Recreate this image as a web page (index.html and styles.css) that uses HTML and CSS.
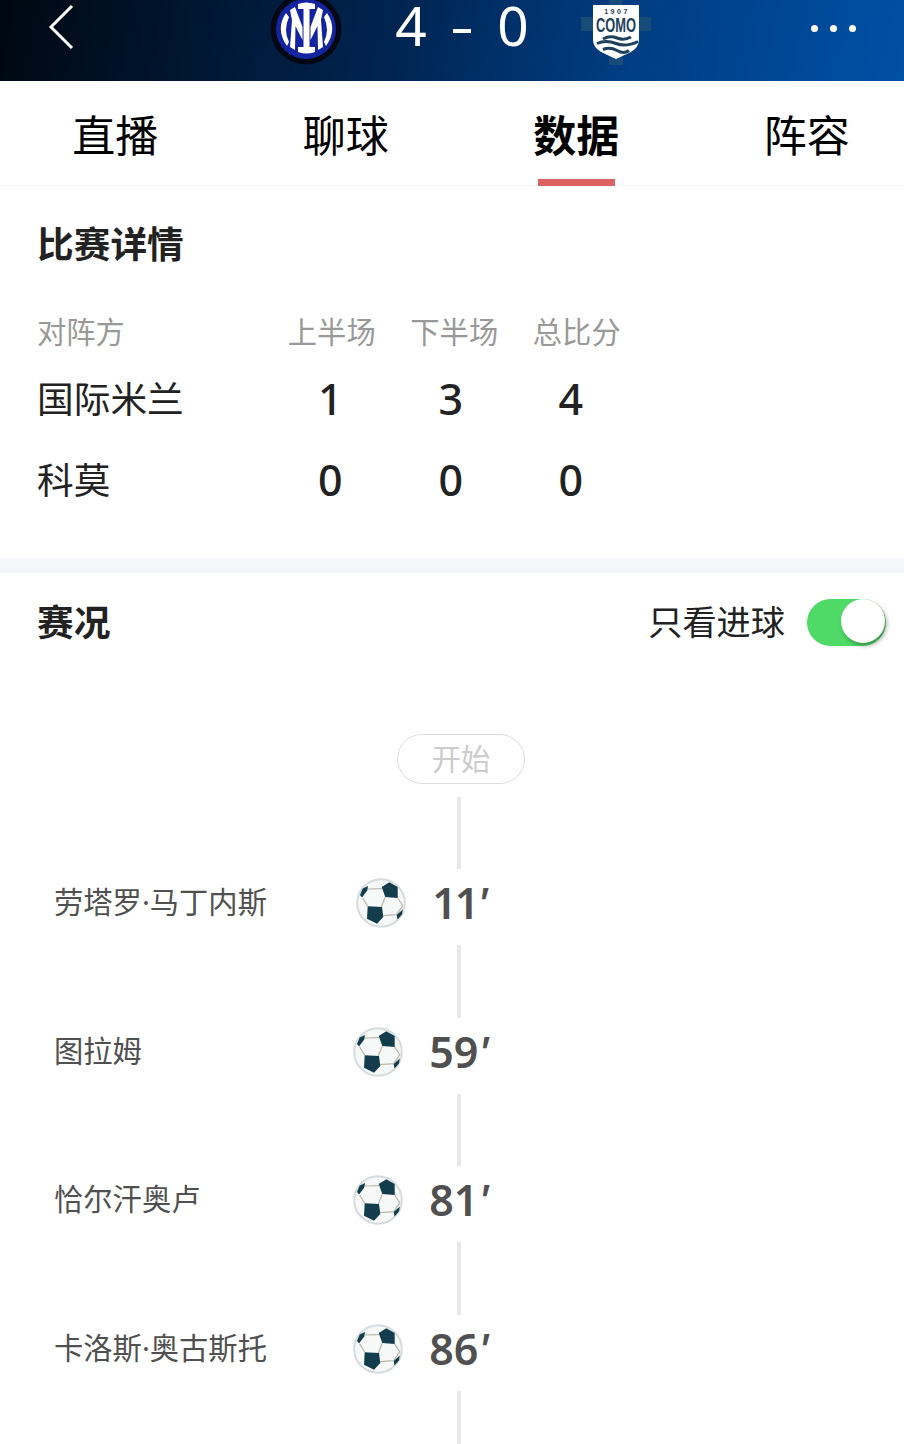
FILE: index.html
```
<!DOCTYPE html>
<html lang="zh-CN">
<head>
  <meta charset="UTF-8" />
  <meta name="viewport" content="width=device-width, initial-scale=1.0"/>
  <title>国际米兰 4 - 0 科莫</title>
  <link rel="stylesheet" href="styles.css">
</head>
<body>
  <!-- shared football icon -->
  <svg class="defs" width="0" height="0">
    <symbol id="ball" viewBox="0 0 50 50">
      <circle cx="25" cy="25" r="23.800" fill="#f7f8f8" stroke="#d6dcde" stroke-width="2"/>
      <path d="M12 11L26 10.700M6.700 20L11.700 28.300M29.300 19L25.300 29M41.700 20L46.700 27.700L40.700 36.700L27.300 37.700" fill="none" stroke="#b9b8a8" stroke-width="1.200"/>
      <path d="M25.700 9L33.300 4.300L41.700 9V20L29.300 19ZM11.700 28.300L26 29L27.300 39L21 45.700L11 40.700ZM4 17L6.700 10.500L12 8L11.300 12.500L6 19.500ZM40.700 37L46.800 31.500L46 36.500L41.500 41.500Z" fill="#133d4d"/>
    </symbol>
  </svg>

  <header class="topbar">
    <svg class="back" width="26" height="46" viewBox="0 0 26 46">
      <path d="M24 2L3 23l21 21" fill="none" stroke="#fff" stroke-width="3"/>
    </svg>
    <div class="score">
      <svg class="inter" width="74" height="74" viewBox="0 0 74 74">
        <circle cx="37" cy="37" r="35.500" fill="#040814"/>
        <circle cx="37" cy="37" r="30" fill="#1424a0"/>
        <g fill="#fff">
          <path d="M29 12q8-3 17 0v5h-5.500v38H46v5q-9 3-17 0v-5h5.500V17H29z"/>
          <path d="M21 18l5-3 7.500 20v13l-7-14-.5 24-5-3 2-27z"/>
          <path d="M54 18l-5-3-7.500 20v13l7-14 .5 24 5-3-2-27z"/>
          <path d="M17 21q-11 16 1 33l2-4q-6-12 0-25zM58 21q11 16-1 33l-2-4q6-12 0-25z"/>
        </g>
      </svg>
      <span class="num">4</span>
      <span class="dash"></span>
      <span class="num">0</span>
      <svg class="como" width="70" height="66" viewBox="0 0 70 66">
        <path d="M0 18h70v14H0zM28 0h14v66H28z" fill="#174b79"/>
        <path d="M12 6h46v35q0 7-8 12l-15 7-15-7q-8-5-8-12z" fill="#fff"/>
        <text x="36" y="14.500" class="crest-year">1907</text>
        <text x="35" y="33" class="crest-name" textLength="40" lengthAdjust="spacingAndGlyphs">COMO</text>
        <g fill="none" stroke="#1d405c" stroke-width="3">
          <path d="M22 40q7-4 14-1t14-1"/>
          <path d="M16 44.500q9-4 19 0t22-2"/>
          <path d="M22 50.500q7-3 14 1t12 0"/>
        </g>
      </svg>
    </div>
    <div class="more"><i></i><i></i><i></i></div>
  </header>

  <nav class="tabs">
    <a class="tab">直播</a>
    <a class="tab">聊球</a>
    <a class="tab active">数据</a>
    <a class="tab">阵容</a>
  </nav>

  <section class="detail">
    <h2>比赛详情</h2>
    <table class="score_table">
      <tr>
        <th class="team">对阵方</th>
        <th>上半场</th>
        <th>下半场</th>
        <th>总比分</th>
      </tr>
      <tr>
        <td class="team">国际米兰</td>
        <td>1</td>
        <td>3</td>
        <td>4</td>
      </tr>
      <tr>
        <td class="team">科莫</td>
        <td>0</td>
        <td>0</td>
        <td>0</td>
      </tr>
    </table>
  </section>

  <section class="events">
    <div class="events_head">
      <h2>赛况</h2>
      <span class="label">只看进球</span>
      <div class="switch"><div class="knob"></div></div>
    </div>

    <div class="timeline">
      <div class="start">开始</div>
      <div class="line"></div>
      <div class="event">
        <div class="player"><span>劳塔罗·马丁内斯</span><svg class="ball"><use href="#ball"/></svg></div>
        <div class="time narrow">11<i>'</i></div>
      </div>
      <div class="line"></div>
      <div class="event">
        <div class="player"><span>图拉姆</span><svg class="ball"><use href="#ball"/></svg></div>
        <div class="time">59<i>'</i></div>
      </div>
      <div class="line"></div>
      <div class="event">
        <div class="player"><span>恰尔汗奥卢</span><svg class="ball"><use href="#ball"/></svg></div>
        <div class="time">81<i>'</i></div>
      </div>
      <div class="line"></div>
      <div class="event">
        <div class="player"><span>卡洛斯·奥古斯托</span><svg class="ball"><use href="#ball"/></svg></div>
        <div class="time">86<i>'</i></div>
      </div>
      <div class="line"></div>
    </div>
  </section>
</body>
</html>
```
FILE: styles.css
```
* {
  box-sizing: border-box;
}

body {
  margin: 0;
  height: 1444px;
  overflow: hidden;
  background-color: #fff;
  color: #222;
  font-family: "Noto Sans CJK SC", sans-serif;
}

h2 {
  margin: 0;
  font-size: 36.7px;
  line-height: 50px;
  font-weight: 700;
}

.defs {
  display: block;
}

/* top bar */
.topbar {
  height: 81px;
  display: flex;
  align-items: flex-start;
  background: linear-gradient(100deg, #000811 0%, #00152f 20%, #002450 43%, #003c80 68%, #0050a6 100%);
  color: #fff;
}

.back {
  margin: 4px 0 0 48px;
}

.score {
  display: flex;
  align-items: flex-start;
  margin-left: 195px;
}

.inter {
  margin-top: -8px;
}

.num {
  width: 36px;
  margin-left: 50px;
  font-family: "Noto Sans", sans-serif;
  font-size: 55px;
  line-height: 50px;
  text-align: center;
}

.dash {
  width: 18px;
  height: 4px;
  margin: 29px 6px 0 24px;
  background-color: #fff;
}

.dash + .num {
  margin-left: 18px;
}

.como {
  margin: -1px 0 0 50px;
}

.crest-year {
  font: bold 7px "Liberation Sans", sans-serif;
  letter-spacing: 2.5px;
  text-anchor: middle;
  fill: #1d405c;
}

.crest-name {
  font: bold 21px "Liberation Sans", sans-serif;
  text-anchor: middle;
  fill: #1d405c;
}

.more {
  display: flex;
  gap: 12px;
  margin: 25px 48px 0 auto;
}

.more i {
  width: 7px;
  height: 7px;
  border-radius: 50%;
  background-color: #fff;
}

/* tabs */
.tabs {
  height: 105px;
  display: flex;
  border-bottom: 1px solid #f5f5f5;
}

.tab {
  flex: 0 0 230.5px;
  display: flex;
  flex-direction: column;
  align-items: center;
  height: 105px;
  padding-top: 22px;
  font-size: 43px;
  line-height: 60px;
  color: #000;
}

.active {
  font-weight: 700;
}

.active::after {
  content: "";
  width: 77px;
  height: 7px;
  margin-top: auto;
  background-color: #dd6362;
}

/* match details */
.detail {
  height: 387px;
  padding: 31px 37px 0;
  border-bottom: 15px solid #f5f6f9;
}

.score_table {
  margin-top: 36px;
  table-layout: fixed;
  border-collapse: collapse;
  width: 601px;
}

.score_table th,
.score_table td {
  width: 122.5px;
  padding: 0;
  text-align: center;
}

.score_table th {
  height: 54px;
  font-size: 29.3px;
  line-height: 54px;
  font-weight: 400;
  color: #999;
}

.score_table td {
  height: 81px;
  padding: 2px 3px 0 0;
  font-family: "Noto Sans", sans-serif;
  font-size: 43px;
  line-height: 79px;
  font-weight: 500;
}

.score_table td:nth-child(3) {
  padding-right: 7px;
}

.score_table td:nth-child(4) {
  padding-right: 12px;
}

.score_table .team {
  width: 233.5px;
  text-align: left;
}

.score_table td.team {
  padding: 0;
  font-family: "Noto Sans CJK SC", sans-serif;
  font-size: 36.7px;
  font-weight: 400;
}

/* events */
.events_head {
  height: 97px;
  display: flex;
  align-items: center;
  padding: 0 18px 0 37px;
}

.events_head h2 {
  margin-top: -4px;
}

.label {
  margin: -4px 0 0 auto;
  font-size: 34.2px;
  line-height: 50px;
}

.switch {
  width: 79px;
  height: 47px;
  margin: 2px 0 0 22px;
  display: flex;
  justify-content: flex-end;
  border-radius: 24px;
  background-color: #4fd966;
}

.knob {
  width: 44px;
  height: 44px;
  margin-right: 1px;
  border-radius: 50%;
  background-color: #fff;
  box-shadow: 2px 3px 4px rgba(0, 0, 0, 0.3);
}

.timeline {
  padding: 64px 0 0 14px;
}

.start {
  width: 128px;
  height: 50px;
  margin: 0 auto 13px 383px;
  border: 1px solid #ddd;
  border-radius: 25px;
  text-align: center;
  font-size: 29.3px;
  line-height: 44px;
  color: #ccc;
}

.line {
  width: 4px;
  height: 72.4px;
  margin: 0 auto;
  background-color: #e8e8e8;
}

.event {
  height: 76px;
  display: grid;
  grid-template-columns: 1fr auto 1fr;
  align-items: center;
  padding-bottom: 8px;
  color: #505050;
}

.player {
  display: flex;
  align-items: center;
  justify-content: space-between;
  padding: 0 26px 0 40px;
  font-family: "Noto Sans", "Noto Sans CJK SC", sans-serif;
  font-size: 29.3px;
  line-height: 44px;
}

.player span {
  margin-top: -2px;
}

.ball {
  width: 50px;
  height: 50px;
}

.time {
  font-family: "Noto Sans", sans-serif;
  font-size: 43px;
  line-height: 60px;
  font-weight: 600;
}

.narrow {
  letter-spacing: -2px;
}
```
